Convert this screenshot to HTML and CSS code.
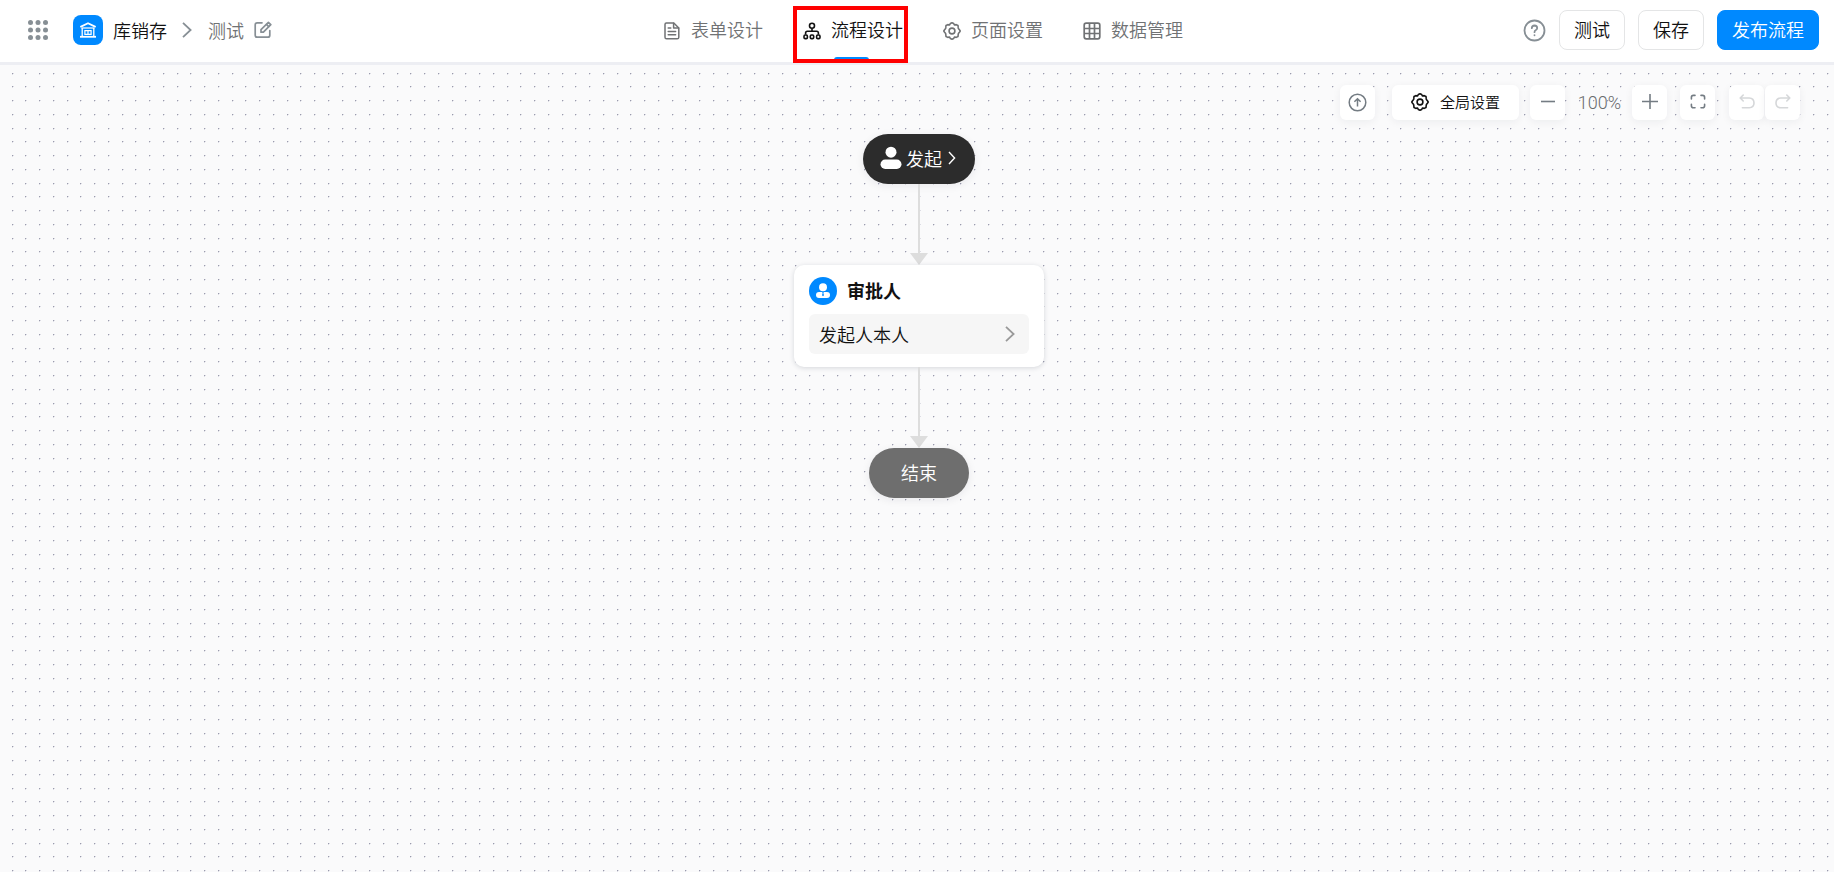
FILE: index.html
```html
<!DOCTYPE html>
<html lang="zh-CN">
<head>
<meta charset="utf-8">
<title>流程设计</title>
<meta name="viewport" content="width=device-width, initial-scale=1">
<link rel="stylesheet" href="styles.css">
</head>
<body>
<header class="header">
  <div class="crumbs">
    <button class="icon-btn apps" type="button" aria-label="应用列表">
      <svg width="20" height="20" viewBox="0 0 20 20" fill="currentColor"><circle cx="2.5" cy="2.5" r="2.5"/><circle cx="10" cy="2.5" r="2.5"/><circle cx="17.5" cy="2.5" r="2.5"/><circle cx="2.5" cy="10" r="2.5"/><circle cx="10" cy="10" r="2.5"/><circle cx="17.5" cy="10" r="2.5"/><circle cx="2.5" cy="17.5" r="2.5"/><circle cx="10" cy="17.5" r="2.5"/><circle cx="17.5" cy="17.5" r="2.5"/></svg>
    </button>
    <span class="logo">
      <svg width="16" height="16" viewBox="0 0 16 16" fill="none" stroke="currentColor"><path d="M1 4.600L8 1.200l7 3.400" stroke-width="1.800" stroke-linecap="round" stroke-linejoin="round"/><path d="M1.500 6h13" stroke-width="1.200"/><path d="M2.200 6v8M13.800 6v8" stroke-width="1.300"/><path d="M0 14.800h16" stroke-width="1.800"/><path d="M4.500 8.600h7M4.500 12.400h7M4.900 8v5M8 8v5M11.100 8v5" stroke-width="1.200"/></svg>
    </span>
    <a class="app-name" href="#">库销存</a>
    <svg class="sep" width="10" height="16" viewBox="0 0 10 16" fill="none" stroke="currentColor" stroke-width="1.800"><path d="M1 .8L8.600 8 1 15.200"/></svg>
    <span class="form-name">测试</span>
    <button class="icon-btn" type="button" aria-label="重命名">
      <svg width="18" height="18" viewBox="0 0 18 18" fill="none" stroke="currentColor" stroke-width="1.700" stroke-linecap="round" stroke-linejoin="round"><path d="M8 1.800H3.200Q1.200 1.800 1.200 3.800v10.400q0 2 2 2h10.600q2 0 2-2V9.500"/><path d="M7 11.200V8.600L14.400 1.300l2.400 2.300L9.400 11.200z"/><path d="M12.500 3.400l2.200 2.200"/></svg>
    </button>
  </div>
  <nav class="tabs">
    <a class="tab" href="#">
      <svg width="18" height="18" viewBox="0 0 18 18" fill="none" stroke="currentColor" stroke-width="1.500" stroke-linejoin="round" stroke-linecap="round"><path d="M3.400 1h7.400L15.800 6v9.200q0 1.600-1.600 1.600H3.600Q2 16.800 2 15.200V2.600Q2 1 3.400 1z"/><path d="M10.600 1.200V6h5M5.200 6h2.600M5.200 9.400h7.400M5.200 12.800h7.400"/></svg>
      <span>表单设计</span>
    </a>
    <a class="tab active" href="#" aria-current="page">
      <svg width="18" height="18" viewBox="0 0 18 18" fill="none" stroke="currentColor" stroke-width="1.600"><circle cx="9" cy="3.800" r="2.500"/><path d="M9 6.400v3M2.600 12.600V11q0-1.800 1.800-1.800h9.200q1.800 0 1.800 1.800v1.600"/><rect x="1" y="13" width="3.400" height="3.600" rx="1.200"/><rect x="7.300" y="13" width="3.400" height="3.600" rx="1.200"/><rect x="13.600" y="13" width="3.400" height="3.600" rx="1.200"/></svg>
      <span>流程设计</span>
    </a>
    <a class="tab" href="#">
      <svg width="18" height="18" viewBox="0 0 18 18" fill="none" stroke="currentColor" stroke-width="1.600" stroke-linejoin="round"><path d="M7.300 1.500L9 .8l1.700.7.700 1.500 1.800-.4 1.800 .9.200 1.900.2 1.200L16.600 8l.6 1-.6 1-1.200 1.400-.2 1.200-.2 1.900-1.800.9-1.800-.4-.7 1.500-1.700.7-1.700-.7L6.600 15l-1.800.4-1.800-.9-.2-1.900-.2-1.200L1.400 10 .8 9l.6-1 1.200-1.400.2-1.200L3 3.500l1.800-.9 1.800.4z"/><circle cx="9" cy="9" r="2.900"/></svg>
      <span>页面设置</span>
    </a>
    <a class="tab" href="#">
      <svg width="18" height="18" viewBox="0 0 18 18" fill="none" stroke="currentColor" stroke-width="1.700"><rect x="1.200" y="1.200" width="15.600" height="15.600" rx="2"/><path d="M1.500 6.500h15M1.500 11.500h15M6.500 1.500v15M11.500 1.500v15"/></svg>
      <span>数据管理</span>
    </a>
  </nav>
  <div class="actions">
    <button class="icon-btn help" type="button" aria-label="帮助">
      <svg width="23" height="23" viewBox="0 0 23 23" fill="none" stroke="currentColor" stroke-width="1.800" stroke-linecap="round"><circle cx="11.500" cy="11.500" r="10"/><path d="M8.800 9.200q.1-2.700 2.700-2.700 2.700.1 2.700 2.500 0 1.200-1.300 2-1.400.8-1.400 2.200"/><path d="M11.500 16.100v.2"/></svg>
    </button>
    <button class="btn" type="button">测试</button>
    <button class="btn" type="button">保存</button>
    <button class="btn primary" type="button">发布流程</button>
  </div>
</header>
<main class="canvas">
  <div class="toolbar">
    <button class="tool" type="button" aria-label="回到顶部">
      <svg width="19" height="19" viewBox="0 0 19 19" fill="none" stroke="currentColor" stroke-width="1.500"><circle cx="9.500" cy="9.500" r="8.300"/><path d="M9.500 13.500V6M6.400 8.800l3.100-3 3.100 3"/></svg>
    </button>
    <button class="tool settings" type="button">
      <svg width="18" height="18" viewBox="0 0 18 18" fill="none" stroke="currentColor" stroke-width="1.600" stroke-linejoin="round"><path d="M7.300 1.500L9 .8l1.700.7.700 1.500 1.800-.4 1.800 .9.200 1.900.2 1.200L16.600 8l.6 1-.6 1-1.200 1.400-.2 1.200-.2 1.900-1.800.9-1.800-.4-.7 1.500-1.700.7-1.700-.7L6.600 15l-1.800.4-1.800-.9-.2-1.900-.2-1.200L1.400 10 .8 9l.6-1 1.200-1.400.2-1.200L3 3.500l1.800-.9 1.800.4z"/><circle cx="9" cy="9" r="2.900"/></svg>
      <span>全局设置</span>
    </button>
    <div class="zoom">
      <button class="tool" type="button" aria-label="缩小">
        <svg width="16" height="18" viewBox="0 0 16 18" fill="none" stroke="currentColor" stroke-width="1.600"><path d="M1 7.500h14"/></svg>
      </button>
      <span class="level">100%</span>
      <button class="tool" type="button" aria-label="放大">
        <svg width="16" height="18" viewBox="0 0 16 18" fill="none" stroke="currentColor" stroke-width="1.600"><path d="M0 7.500h16M8 0v15"/></svg>
      </button>
    </div>
    <button class="tool" type="button" aria-label="适应画布">
      <svg width="16" height="18" viewBox="0 0 16 18" fill="none" stroke="currentColor" stroke-width="1.600" stroke-linecap="round"><path d="M1.400 5V3.400q0-2 2-2H5M11 1.400h1.600q2 0 2 2V5M14.600 10.200v1.600q0 2-2 2H11M5 13.800H3.400q-2 0-2-2v-1.600"/></svg>
    </button>
    <div class="history">
      <button class="tool off" type="button" aria-label="撤销">
        <svg width="16" height="18" viewBox="0 0 16 18" fill="none" stroke="currentColor" stroke-width="1.600" stroke-linecap="round" stroke-linejoin="round"><path d="M4.200 1L1.200 4l3 3M1.400 4h8.800q4.800.3 4.800 5 0 4.500-4.800 4.800H3.400"/></svg>
      </button>
      <button class="tool off" type="button" aria-label="重做">
        <svg width="16" height="18" viewBox="0 0 16 18" fill="none" stroke="currentColor" stroke-width="1.600" stroke-linecap="round" stroke-linejoin="round"><path d="M11.800 1l3 3-3 3M14.600 4H5.800Q1 4.300 1 9q0 4.500 4.800 4.800h6.800"/></svg>
      </button>
    </div>
  </div>
  <div class="flow">
    <button class="pill start" type="button">
      <svg width="22" height="24" viewBox="0 0 22 24" fill="currentColor"><circle cx="11" cy="6.200" r="5.500"/><rect x=".5" y="13.500" width="21" height="9.500" rx="4.700"/></svg>
      <span>发起</span>
      <svg class="go" width="8" height="14" viewBox="0 0 8 14" fill="none" stroke="currentColor" stroke-width="1.400"><path d="M1 1l5.600 6L1 13"/></svg>
    </button>
    <div class="link"></div>
    <section class="card">
      <h2 class="card-head">
        <svg width="28" height="28" viewBox="0 0 28 28"><circle cx="14" cy="14" r="14" fill="#0089ff"/><circle cx="14" cy="10.200" r="4" fill="#fff"/><rect x="7" y="15" width="14" height="6" rx="3" fill="#fff"/><path d="M13.200 15h1.600l-.4 1.300.6 1.900-1 1-1-1 .6-1.900z" fill="#0089ff"/></svg>
        <span>审批人</span>
      </h2>
      <button class="field" type="button">
        <span>发起人本人</span>
        <svg width="10" height="16" viewBox="0 0 10 16" fill="none" stroke="currentColor" stroke-width="1.800"><path d="M1 .8L8.600 8 1 15.200"/></svg>
      </button>
    </section>
    <div class="link"></div>
    <div class="pill end">结束</div>
  </div>
</main>
</body>
</html>
```

FILE: styles.css
```css
* {
  box-sizing: border-box;
}

body {
  margin: 0;
  min-height: 100vh;
  display: flex;
  flex-direction: column;
  font-family: "Noto Sans CJK SC", "Noto Sans", sans-serif;
  font-weight: 350;
  font-size: 18px;
  line-height: 24px;
  color: #111;
}

button {
  margin: 0;
  padding: 0;
  border: 0;
  background: none;
  color: inherit;
  font: inherit;
  cursor: pointer;
}

a {
  color: inherit;
  text-decoration: none;
}

svg {
  display: block;
  flex: none;
}

.header {
  display: grid;
  grid-template-columns: 1fr auto 1fr;
  align-items: center;
  height: 65px;
  padding: 0 15px 2px 27px;
  border-bottom: 3px solid #edeef3;
  background: #fff;
}

.crumbs,
.actions,
.tabs,
.tab {
  display: flex;
  align-items: center;
}

.icon-btn {
  color: #878f95;
}

.apps {
  margin: 0 25px 0 1px;
}

.logo {
  display: grid;
  place-items: center;
  width: 30px;
  height: 30px;
  margin-right: 10px;
  border-radius: 8px;
  background: #0089ff;
  color: #fff;
}

.sep {
  margin: 0 16px 0 15px;
  color: #878f95;
}

.form-name {
  margin-right: 10px;
  color: #707274;
}

.tabs {
  gap: 40px;
}

.tab {
  position: relative;
  gap: 10px;
  height: 56px;
  padding-bottom: 2px;
  color: #707274;
}

.tab svg {
  margin-top: 4px;
}

.tab.active {
  color: #111;
}

.tab.active::before {
  content: "";
  position: absolute;
  left: 31px;
  bottom: -2px;
  width: 35px;
  height: 3px;
  border-radius: 3px 3px 0 0;
  background: #0089ff;
}

.tab.active::after {
  content: "";
  position: absolute;
  inset: 4px -5px -5px -10px;
  border: 4px solid #f00;
}

.actions {
  justify-content: flex-end;
  gap: 13px;
}

.btn {
  height: 40px;
  padding: 0 14px 2px;
  border: 1px solid #e4e5e6;
  border-radius: 8px;
  background: #fff;
}

.btn.primary {
  border-color: #0089ff;
  background: #0089ff;
  color: #fff;
}

.canvas {
  position: relative;
  flex: 1;
  padding: 69px 0 40px 4px;
  background: #fafafb url("data:image/svg+xml,%3Csvg xmlns='http://www.w3.org/2000/svg' width='55' height='55'%3E%3Cdefs%3E%3Cg id='d'%3E%3Cpath d='M0 0h1v1h-1z' fill='%239a9bad'/%3E%3Cpath d='M1 0h1v1h-1zM0 1h1v1h-1z' fill='%23dcdce4'/%3E%3C/g%3E%3Cg id='r'%3E%3Cuse href='%23d'/%3E%3Cuse href='%23d' x='13'/%3E%3Cuse href='%23d' x='27'/%3E%3Cuse href='%23d' x='41'/%3E%3C/g%3E%3C/defs%3E%3Cuse href='%23r'/%3E%3Cuse href='%23r' y='13'/%3E%3Cuse href='%23r' y='27'/%3E%3Cuse href='%23r' y='41'/%3E%3C/svg%3E") 12px 8px / 55px 55px;
}

.toolbar {
  position: absolute;
  top: 20px;
  right: 34px;
  display: flex;
  align-items: center;
  gap: 13px;
}

.tool {
  display: flex;
  align-items: center;
  justify-content: center;
  width: 35px;
  height: 35px;
  border-radius: 6px;
  background: #fff;
  box-shadow: 0 2px 8px rgba(20, 30, 50, 0.06);
  color: #747c83;
}

.settings {
  gap: 11px;
  width: 127px;
  margin: 0 -2px 0 4px;
  padding-bottom: 2px;
  font-size: 15px;
  color: #111;
}

.off {
  color: #d5d7d9;
}

.zoom,
.history {
  display: flex;
  align-items: center;
}

.level {
  width: 67px;
  padding-left: 2px;
  text-align: center;
  font-family: Roboto, sans-serif;
  font-size: 18px;
  color: #6a6c6e;
}

.history {
  gap: 1px;
  margin-left: 1px;
}

.flow {
  display: flex;
  flex-direction: column;
  align-items: center;
}

.pill {
  display: flex;
  align-items: center;
  justify-content: center;
  height: 50px;
  padding-bottom: 2px;
  border-radius: 25px;
  box-shadow: 0 2px 8px rgba(20, 30, 50, 0.08);
  color: #fff;
}

.start {
  gap: 4px;
  padding: 0 19px 2px 17px;
  background: #2c2c2c;
}

.go {
  margin-left: 2px;
}

.end {
  padding: 0 32px 2px;
  background: #6e6e6e;
}

.link {
  display: flex;
  flex-direction: column;
  align-items: center;
  height: 81px;
}

.link::before {
  content: "";
  flex: 1;
  width: 2px;
  background: #ddd;
}

.link::after {
  content: "";
  border: solid transparent;
  border-width: 12px 9px 0;
  border-top-color: #ddd;
}

.card {
  width: 250px;
  padding: 12px 15px 13px;
  border-radius: 10px;
  background: #fff;
  box-shadow: 0 1px 5px rgba(20, 30, 50, 0.16);
}

.card-head {
  display: flex;
  align-items: center;
  gap: 10px;
  margin: 0 0 9px;
  font-size: 18px;
  font-weight: 700;
}

.card-head span {
  padding-bottom: 2px;
}

.field {
  display: flex;
  align-items: center;
  justify-content: space-between;
  width: 100%;
  height: 40px;
  padding: 0 14px 0 10px;
  border-radius: 6px;
  background: #f6f6f6;
}

.field svg {
  color: #999;
}
```
